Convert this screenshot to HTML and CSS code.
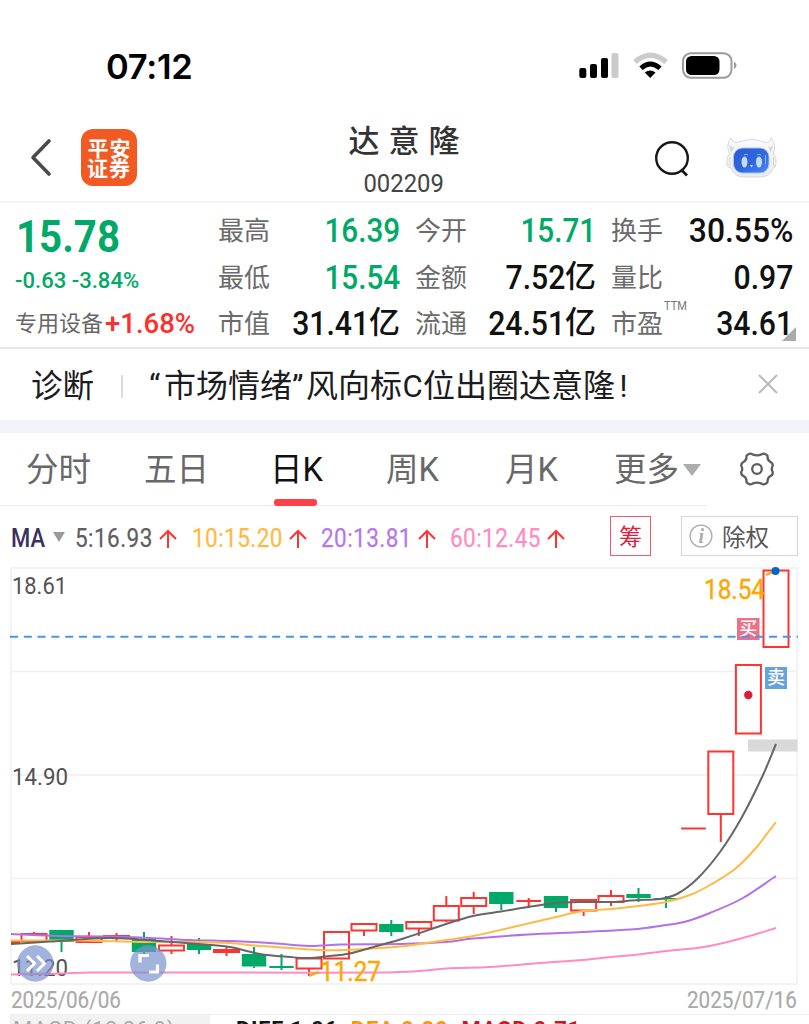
FILE: index.html
```html
<!DOCTYPE html>
<html lang="zh-CN">
<head>
<meta charset="utf-8">
<title>达意隆 002209</title>
<link rel="stylesheet" href="styles.css">
</head>
<body>
<header class="status">
  <span class="clock">07:12</span>
  <svg class="status-icons" width="160" height="28" viewBox="578 52 160 28">
    <g>
      <rect x="579.3" y="68" width="7" height="10" rx="2"/>
      <rect x="590" y="64" width="7" height="14" rx="2"/>
      <rect x="601" y="58" width="7" height="20" rx="2"/>
      <rect x="611.5" y="53" width="7" height="25" rx="2" fill="#cbcbcb"/>
    </g>
    <g fill="none">
      <path d="M635 62 Q650.500 48.500 666 62" stroke="#cbcbcb" stroke-width="5.400"/>
      <path d="M641 68.300 Q650.300 59.600 660 68.300" stroke="#000" stroke-width="4.800"/>
    </g>
    <path d="M644.800 72.500 Q650.300 68.700 655.500 72.500 L650.200 78 Z"/>
    <rect x="683" y="53.200" width="48.500" height="24.600" rx="8" fill="none" stroke="#9b9b9b" stroke-width="2"/>
    <rect x="686" y="56" width="33.500" height="19" rx="5.500"/>
    <path d="M734 61.500 Q739 65.300 734 69.200 Z" fill="#999"/>
  </svg>
</header>

<nav class="nav">
  <svg class="back" width="24" height="40" viewBox="0 0 24 40"><path d="M20 4 L4 20.500 L20 37" fill="none" stroke="#4b4b4d" stroke-width="3.600" stroke-linecap="round" stroke-linejoin="round"/></svg>
  <div class="logo">平安<br>证券</div>
  <div class="title"><b>达意隆</b><span>002209</span></div>
  <svg class="search" width="38" height="40" viewBox="0 0 38 40"><g fill="none" stroke="#17171b" stroke-width="2.400"><circle cx="18" cy="20" r="15.800"/><path d="M27 31.500 L33 37.500" stroke-width="2.800"/></g></svg>
  <svg class="robot" width="52" height="42" viewBox="0 0 52 42">
    <defs>
      <linearGradient id="shell" x1="0" y1="0" x2="0" y2="1"><stop offset="0" stop-color="#fbfbfd"/><stop offset="1" stop-color="#e9ebf0"/></linearGradient>
      <linearGradient id="face" x1="0" y1="0" x2="1" y2="1"><stop offset="0" stop-color="#285bd0"/><stop offset=".55" stop-color="#2f67e2"/><stop offset="1" stop-color="#4c8af4"/></linearGradient>
    </defs>
    <path d="M5 1 Q7 7 13 5 Q26 0 38 5 Q44 7 45 1 Q51 8 47 18 Q50 18 50 24 V27 Q50 31 47 31 Q44 40 34 40 H18 Q8 40 5 31 Q1 31 1 27 V22 Q1 18 4 18 Q-1 8 5 1Z" fill="url(#shell)" stroke="#d6d8dd" stroke-width="1"/>
    <path d="M3 7 Q6 12 9 9 L5 16Z M47 7 Q45 12 42 9 L45 16Z" fill="#d3d9e3"/>
    <path d="M4 20 V29 M47.500 20 V29" stroke="#e8c5ca" stroke-width="1"/>
    <rect x="7.500" y="11" width="35.500" height="25" rx="9" fill="url(#face)" stroke="#a9c4e6" stroke-width="1"/>
    <ellipse cx="18.500" cy="25" rx="3" ry="5.500" fill="#c5dcf8"/><ellipse cx="33" cy="25" rx="3" ry="5.500" fill="#c5dcf8"/>
    <path d="M24 28 H27 L25.500 30.500Z" fill="#d7e8fd"/><path d="M18 18 q2 -1.500 4 0 M31 18 q2 -1.500 4 0 M39.500 18 V27" fill="none" stroke="#8cb4f2" stroke-width="1"/>
  </svg>
</nav>

<section class="quote">
  <div class="price">
    <div class="last"><span class="n">15.78</span></div>
    <div class="change"><span class="n">-0.63 -3.84%</span></div>
    <div class="sector"><span>专用设备</span><span class="n up">+1.68%</span></div>
  </div>
  <dl class="col c1">
    <div><dt>最高</dt><dd class="down"><span class="n">16.39</span></dd></div>
    <div><dt>最低</dt><dd class="down"><span class="n">15.54</span></dd></div>
    <div><dt>市值</dt><dd><span class="n">31.41</span><i>亿</i></dd></div>
  </dl>
  <dl class="col c2">
    <div><dt>今开</dt><dd class="down"><span class="n">15.71</span></dd></div>
    <div><dt>金额</dt><dd><span class="n">7.52</span><i>亿</i></dd></div>
    <div><dt>流通</dt><dd><span class="n">24.51</span><i>亿</i></dd></div>
  </dl>
  <dl class="col c3">
    <div><dt>换手</dt><dd><span class="n wide">30.55%</span></dd></div>
    <div><dt>量比</dt><dd><span class="n">0.97</span></dd></div>
    <div><dt>市盈<sup>TTM</sup></dt><dd><span class="n">34.61</span></dd></div>
  </dl>
  <span class="corner"></span>
</section>

<section class="news">
  <span class="news-tag">诊断</span>
  <span class="bar"></span>
  <span class="headline"><q class="open">“</q>市场情绪<q>”</q>风向标<em>C</em>位出圈达意隆<em class="bang">!</em></span>
  <svg class="close" width="22" height="22" viewBox="0 0 22 22"><path d="M2 2 L20 20 M20 2 L2 20" stroke="#b9b9c6" stroke-width="2"/></svg>
</section>
<div class="band"></div>

<section class="tabs">
  <span class="tab t1">分时</span><span class="tab t2">五日</span><span class="tab t3 active">日<em>K</em></span><span class="tab t4">周<em>K</em></span><span class="tab t5">月<em>K</em></span><span class="tab t6">更多</span>
  <svg class="caret" width="18" height="12" viewBox="0 0 18 12"><path d="M0 0 H18 L9 12Z" fill="#adadad"/></svg>
  <svg class="gear" width="36" height="36" viewBox="-18 -18 36 36"><g fill="none" stroke="#5e5e60" stroke-width="2.300" stroke-linejoin="round"><path d="M-8.500 -14.800 Q-6.500 -16 -4.500 -14.600 Q0 -12.600 4.500 -14.600 Q6.500 -16 8.500 -14.800 L10.500 -13.300 Q10.200 -8.500 13.500 -7 Q16 -6 15.700 -3 Q13.800 0 15.700 3 Q16 6 13.500 7 Q10.200 8.500 10.500 13.300 L8.500 14.800 Q6.500 16 4.500 14.600 Q0 12.600 -4.500 14.600 Q-6.500 16 -8.500 14.800 L-10.500 13.300 Q-10.200 8.500 -13.500 7 Q-16 6 -15.700 3 Q-13.800 0 -15.700 -3 Q-16 -6 -13.500 -7 Q-10.200 -8.500 -10.500 -13.300Z"/><circle r="4.800"/></g></svg>
</section>

<section class="ma">
  <span class="ma-name"><span class="n">MA</span></span>
  <span class="ma-caret"></span>
  <span class="ma-item m5"><span class="n">5:16.93</span></span>
  <svg class="arrow"><use href="#up"/></svg>
  <span class="ma-item m10"><span class="n">10:15.20</span></span>
  <svg class="arrow"><use href="#up"/></svg>
  <span class="ma-item m20"><span class="n">20:13.81</span></span>
  <svg class="arrow"><use href="#up"/></svg>
  <span class="ma-item m60"><span class="n">60:12.45</span></span>
  <svg class="arrow"><use href="#up"/></svg>
  <span class="chip">筹</span>
  <span class="adjust"><svg width="24" height="24" viewBox="0 0 24 24"><circle cx="12" cy="12" r="10.900" fill="none" stroke="#ababab" stroke-width="1.300"/><text x="12.300" y="18.500" class="info">i</text></svg><span>除权</span></span>
  <svg width="0" height="0"><defs><symbol id="up" viewBox="0 0 18 20"><path d="M9 19 V2 M1 10 L9 2 L17 10" fill="none" stroke="#ff3330" stroke-width="2"/></symbol></defs></svg>
</section>

<svg class="chart" width="809" height="447" viewBox="0 567 809 447">
  <g class="grid">
    <path d="M11 568 H798 M11 671.500 H798 M11 775 H798 M11 878.500 H798 M11 984 H798 M11 568 V984 M797 568 V984"/>
  </g>
  <rect x="748" y="739.500" width="49.500" height="12" fill="#d9d9d9"/>
  <text class="axis" x="12" y="594" textLength="55" lengthAdjust="spacingAndGlyphs">18.61</text>
  <text class="axis" x="12" y="785" textLength="56" lengthAdjust="spacingAndGlyphs">14.90</text>
  <text class="axis" x="12" y="976" textLength="56" lengthAdjust="spacingAndGlyphs">11.20</text>
  <g id="candles"></g>
  <g id="averages"></g>
  <text class="peak" x="704" y="599" textLength="61" lengthAdjust="spacingAndGlyphs">18.54</text>
  <text class="peak" x="320" y="980.500" textLength="61" lengthAdjust="spacingAndGlyphs">11.27</text>
  <path d="M309 976 L319 972 M766 575 L775 571" stroke="#ffa600" stroke-width="2"/>
  <circle cx="775.500" cy="571" r="4" fill="#0066c8"/>
  <circle cx="748.300" cy="695" r="4.200" fill="#df1c3b"/>
  <rect x="737" y="618" width="22.500" height="22" fill="#ec7186"/>
  <text class="mark" x="748.300" y="635">买</text>
  <rect x="765" y="667" width="22" height="22" fill="#66a2df"/>
  <text class="mark" x="776" y="684">卖</text>
  <path d="M10 636.800 H798" stroke="#4a92f3" stroke-width="2" stroke-dasharray="8 5.800"/>
  <g class="float">
    <circle cx="35.300" cy="963.500" r="18.200"/><circle cx="148.300" cy="963.500" r="18.200"/>
    <path d="M27 956 L34.500 963.500 L27 971 M37 956 L44.500 963.500 L37 971" stroke-width="3"/>
    <path d="M140 962.500 V955.500 H149 M157.500 964.500 V972 H149" stroke-width="3.200"/>
  </g>
  <text class="date" x="11" y="1007.500" textLength="110" lengthAdjust="spacingAndGlyphs">2025/06/06</text>
  <text class="date" x="687" y="1007.500" textLength="110" lengthAdjust="spacingAndGlyphs">2025/07/16</text>
</svg>

<footer class="macd">
  <span class="macd-name">MACD (12,26,9)</span>
  <span class="macd-values"><b class="dif">DIFF 1.06</b><b class="dea">DEA 0.80</b><b class="bar-value">MACD 0.71</b></span>
</footer>
<script src="chart.js"></script>
</body>
</html>
```
FILE: styles.css
```css
* { box-sizing: border-box; }
body { margin: 0; width: 809px; height: 1024px; overflow: hidden; background: #fff; color: #111; font-family: Roboto, "Noto Sans CJK SC", sans-serif; }
svg { display: block; flex: none; }
em, i { font-style: normal; }
.n { display: inline-block; transform: scaleX(.9); transform-origin: left center; white-space: nowrap; }

.status { height: 112px; padding: 45px 71px 0 106px; display: flex; justify-content: space-between; }
.clock { font: 600 34.5px/43px Inter, sans-serif; letter-spacing: -.3px; color: #000; }
.status-icons { margin-top: 7px; }

.nav { height: 91px; border-bottom: 2px solid #f5f5f7; display: flex; align-items: flex-start; padding-left: 29px; }
.back { margin-top: 25px; }
.logo { margin: 17px 0 0 28px; width: 56px; height: 57px; border-radius: 12px; background: #f15a22; color: #fff; text-align: center; padding-top: 8px; font: 700 21px/20px "Noto Sans CJK SC", sans-serif; letter-spacing: 1px; text-indent: 1px; }
.title { width: 140px; margin: 6px 0 0 197px; display: flex; flex-direction: column; align-items: center; white-space: nowrap; color: #333; }
.title b { font: 500 31px/42px "Noto Sans CJK SC", sans-serif; letter-spacing: 9px; margin-left: 9px; }
.title span { font-size: 26.5px; line-height: 45px; transform: scaleX(.9); color: #444; }
.search { margin: 26px 0 0 180px; }
.robot { margin: 25px 0 0 34px; }

.quote { position: relative; height: 146px; border-bottom: 2px solid #e6e6ee; display: flex; }
.price { width: 218px; padding-left: 15px; color: #00a968; white-space: nowrap; }
.last { height: 55px; line-height: 70px; font-size: 43.5px; font-weight: 700; padding-left: 1px; }
.change { height: 42px; line-height: 44px; font-size: 22.5px; font-weight: 500; }
.last .n { transform: scaleX(.925); }
.change .n { transform: scaleX(.98); }
.sector { display: flex; line-height: 47px; font-size: 22px; color: #666; }
.sector > span:first-child { width: 90px; }
.sector .up { color: #ff2d2d; font-weight: 500; font-size: 27.5px; transform: scaleX(1); }
.col { margin: 0; padding-top: 5px; }
.col div { height: 46.5px; display: flex; justify-content: space-between; line-height: 46px; }
.c1 { width: 182px; margin-right: 15px; }
.c2 { width: 181px; margin-right: 15px; }
.c3 { width: 182px; }
dt { position: relative; color: #6b6b6b; font-size: 26px; }
dd { margin: 0; font-size: 33px; font-weight: 500; white-space: nowrap; display: flex; }
dd i { font-size: 31px; line-height: 44px; }
dd .n { transform-origin: right center; transform: scaleX(.915); }
.down .n { transform: scaleX(.9); }
dd .wide { transform: scaleX(.965); }
.down { color: #00a968; }
sup { position: absolute; left: 53px; top: -18px; font-size: 13px; color: #777; transform: scaleX(.85); transform-origin: left; }
.corner { position: absolute; right: 13px; bottom: 6px; border-left: 14px solid transparent; border-bottom: 14px solid #aaa; }

.news { height: 71px; display: flex; align-items: center; padding-left: 31px; color: #1b1b20; font-size: 31.5px; }
.news-tag { margin-top: -4px; }
.bar { width: 2px; height: 23px; margin: 4px 26px 0 27px; background: #dcdce0; }
.headline { width: 480px; margin-top: -3px; white-space: nowrap; font-size: 32px; }
.headline em { display: inline-block; width: 21px; text-align: center; font-size: 31px; }
.headline .bang { width: 17px; }
q { quotes: none; font-family: Roboto, sans-serif; display: inline-block; width: 14px; }
.open { width: 15px; }
.close { margin-left: 128px; margin-top: -2px; }
.band { height: 13px; background: #f2f4f9; }

.tabs { height: 73px; display: flex; line-height: 74px; font-size: 32.5px; color: #686868; position: relative; padding-left: 26px; }
.tabs::after { content: ""; position: absolute; left: 0; bottom: 0; width: 707px; height: 1px; background: #ebebeb; }
.tab { white-space: nowrap; height: 73px; }
.t1, .t2 { width: 118px; }
.t3 { width: 124px; padding-left: 8px; position: relative; }
.t4 { width: 119px; }
.t5 { width: 109px; }
.t6 { width: 70px; }
.active { color: #111; }
.active::after { content: ""; position: absolute; left: 12px; bottom: 0; width: 43px; height: 7px; border-radius: 3px; background: #ff4145; z-index: 1; }
.caret { margin: 31px 0 0 -1px; }
.gear { margin: 18px 0 0 38px; }

.ma { height: 61px; display: flex; align-items: center; padding-left: 11px; font-size: 25px; line-height: 61px; }
.ma-name { width: 42px; font-weight: 500; color: #3a3060; padding-top: 3px; }
.ma-name .n { transform: scaleX(.88); }
.ma-caret { border: 6px solid transparent; border-top: 10px solid #999; border-bottom: 0; }
.ma-item { white-space: nowrap; letter-spacing: .5px; -webkit-text-stroke: .25px; padding-top: 3px; }
.m5 { width: 84px; margin-left: 10px; color: #5f5f5f; }
.m10 { width: 97px; margin-left: 15px; color: #ffba45; }
.m20 { width: 97px; margin-left: 14px; color: #b578ea; }
.m60 { width: 97px; margin-left: 14px; color: #ff8bc2; }
.arrow { width: 18px; height: 20px; margin-top: 4px; }
.chip { width: 41px; height: 40px; margin: -2px 0 0 45px; border: 1.5px solid #ed5b70; color: #e01c3d; font-size: 23px; line-height: 41px; text-align: center; }
.adjust { width: 117px; height: 40px; margin: -2px 0 0 30px; border: 1px solid #d5d5d5; color: #585858; font-size: 23.5px; line-height: 38px; display: flex; align-items: center; gap: 9px; padding-left: 7px; }
.adjust span { padding-top: 4px; }
.info { font: italic bold 20px "Liberation Serif", serif; fill: #aaa; text-anchor: middle; }

.chart text { font-family: Roboto, "Noto Sans CJK SC", sans-serif; }
.chart { overflow: visible; }
.grid path { fill: none; stroke: #f0f0f2; stroke-width: 1.5; }
.axis { font-size: 24px; fill: #525252; }
.peak { font-size: 27.5px; fill: #ffa600; stroke: #ffa600; stroke-width: .4px; }
.date { font-size: 23.5px; fill: #aaa; stroke: #aaa; stroke-width: .2px; }
.chart .mark { font-size: 18px; font-weight: 500; fill: #fff; text-anchor: middle; }
.float circle { fill: #7b93cf; fill-opacity: .7; }
.float path { fill: none; stroke: #fff; }

.macd { height: 10px; overflow: hidden; display: flex; line-height: 29px; font-size: 22px; white-space: nowrap; margin-left: 10px; border-top: 1px solid #eee; }
.macd-name { width: 200px; padding-left: 3px; background: #f2f2f2; color: #aaa; height: 29px; letter-spacing: .6px; }
.macd-values { padding-left: 26px; display: flex; gap: 13px; letter-spacing: .8px; }
.macd b { font-weight: 700; }
.dif { color: #151515; }
.dea { color: #ff9500; }
.bar-value { color: #d0141c; }
```
FILE: chart.js
```js
const NS = 'http://www.w3.org/2000/svg';
const add = (parent, tag, attrs) => {
  const el = document.createElementNS(NS, tag);
  for (const k in attrs) el.setAttribute(k, attrs[k]);
  parent.appendChild(el);
};
// [centre x, body top, body bottom, wick top, wick bottom, rising]
const candles = [
  [34, 934, 941, 932, 934, 1], [61.5, 930, 942, 930, 952, 0], [89, 937, 942, 932, 937, 1],
  [116.5, 936, 937, 933, 942, 1], [144, 939, 952, 932, 954, 0], [171.5, 945.5, 950.5, 936, 954, 1],
  [199, 944, 950, 938, 954, 0], [226.5, 950, 952, 947, 956, 1], [254, 954, 966.5, 947, 968, 0],
  [281.5, 966, 968, 954, 970, 0], [309, 958.5, 968.5, 957, 976, 1], [336.5, 932, 958.5, 932, 959, 1],
  [364, 924, 930.5, 924, 936, 1], [391.3, 924, 932, 920, 936, 0], [418.8, 922, 928.5, 922, 936, 1],
  [446.3, 906, 920.5, 896, 922, 1], [473.7, 898, 906, 892, 914, 1], [501.3, 892, 904, 892, 910, 0],
  [528.7, 901, 901.2, 898, 908, 1], [556, 896, 908, 896, 912, 0], [583.6, 900, 910.5, 900, 916, 1],
  [611, 896, 902, 890, 906, 1], [638.5, 894, 898, 888, 902, 0], [666, 898, 899.5, 896, 908, 0],
  [693.5, 828.5, 828.6, 828, 829, 1], [720.8, 751.5, 814, 751.5, 842, 1], [748.4, 665, 733.5, 665, 733, 1],
  [776, 570.5, 647, 570.5, 647, 1]
];
const layer = document.getElementById('candles');
add(layer, 'path', { d: 'M11 942 H20', stroke: '#ff3330', 'stroke-width': 3 });
for (const [x, top, bottom, high, low, rising] of candles) {
  const color = rising ? '#ff3330' : '#00a968';
  add(layer, 'path', { d: `M${x} ${high} V${top} M${x} ${bottom} V${low}`, stroke: color, 'stroke-width': 2 });
  if (rising && bottom - top < 0.5) {
    add(layer, 'path', { d: `M${x - 12.4} ${top} H${x + 12.4}`, stroke: color, 'stroke-width': 2 });
  } else if (rising) {
    add(layer, 'rect', { x: x - 12.5, y: top, width: 25, height: bottom - top, fill: '#fff', stroke: color, 'stroke-width': 2 });
  } else {
    add(layer, 'rect', { x: x - 12.2, y: top, width: 24.4, height: bottom - top, fill: color });
  }
}
const averages = {
  '#ff8bc2': [11,974.5,60,973.5,90,972.5,380,972.5,420,971,446,968.5,490,967,540,963,583,960,611,957,638,954.5,666,951,697,948,721,943.5,748,936.5,776,928],
  '#b072e6': [11,934,60,936,110,936.5,150,938,190,940,230,941,270,943,310,946,340,944.5,400,944,446,942,473,938.5,528,934.5,583,932,638,929,660,926,685,921.7,710,913,743,898,776,876],
  '#ffba45': [11,940.5,80,940.5,144,942,190,942,230,943,255,945.5,290,948,320,950,345,950,400,946.5,446,940,473,936,528,923.5,556,917,583,911,611,909,638,906,666,902,690,895,710,885,735,869,755,849,776,822],
  '#666666': [11,944,50,941.5,110,938,160,941,205,944.5,230,947,260,954,290,957,309,958,325,956.5,350,953.5,370,948,405,938,446,924,473,916,501,911.5,528,907,556,903,583,902,611,902,638,900,660,899,677,894,697,879,720,852,742,817,763,775,776,744]
};
// Catmull-Rom spline converted to cubic segments
for (const [stroke, v] of Object.entries(averages)) {
  const p = [];
  for (let i = 0; i < v.length; i += 2) p.push([v[i], v[i + 1]]);
  let d = `M${p[0]}`;
  for (let i = 0; i < p.length - 1; i++) {
    const a = p[i - 1] || p[i], b = p[i], c = p[i + 1], e = p[i + 2] || c;
    const k = c[0] - b[0];
    const m1 = (c[1] - a[1]) / (c[0] - a[0]), m2 = (e[1] - b[1]) / (e[0] - b[0]);
    d += ` C${b[0] + k / 3} ${b[1] + m1 * k / 3} ${c[0] - k / 3} ${c[1] - m2 * k / 3} ${c}`;
  }
  add(document.getElementById('averages'), 'path', { d, fill: 'none', stroke, 'stroke-width': 2 });
}
```
